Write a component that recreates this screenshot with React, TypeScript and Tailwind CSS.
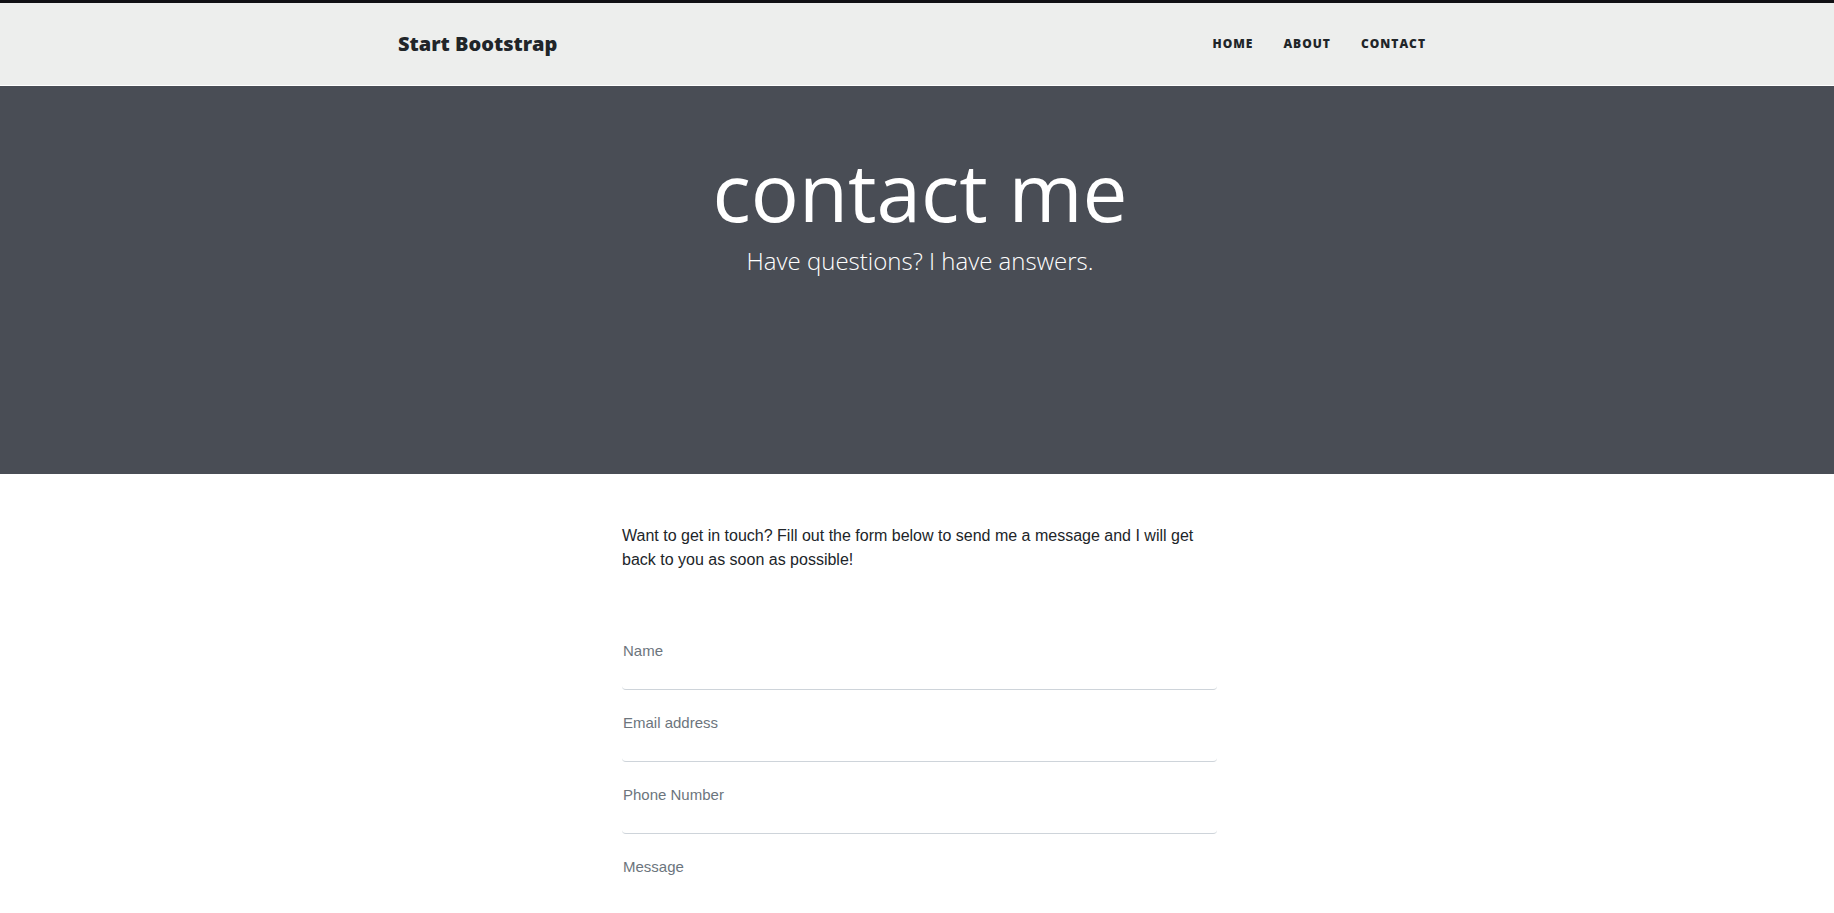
import React from "react";

const fields = ["Name", "Email address", "Phone Number"];

export default function App() {
  return (
    <div className="h-[913px] overflow-hidden bg-white">
      <div className="h-[3px] bg-[#101014]" />
      <nav className="h-[83px] bg-[#edeeed] border-b border-white">
        <div className="flex h-full items-center justify-between pl-[398px] pr-[398px]">
          <a className="text-[20px] font-extrabold text-[#212529] [font-family:'Open_Sans',sans-serif]">
            Start Bootstrap
          </a>
          <ul className="flex items-center gap-[30px] pr-[10px] text-[12px] font-extrabold uppercase tracking-[1px] text-[#212529] [font-family:'Open_Sans',sans-serif]">
            <li>Home</li>
            <li>About</li>
            <li>Contact</li>
          </ul>
        </div>
      </nav>
      <header className="h-[388px] bg-[#494d55] text-white [font-family:'Open_Sans',sans-serif]">
        <div className="flex flex-col items-center pl-[6px] pt-[57px]">
          <h1 className="text-[80px] font-normal leading-[96px]">contact me</h1>
          <span className="mt-[4px] text-[24px] font-light leading-[36px]">
            Have questions? I have answers.
          </span>
        </div>
      </header>
      <main className="mx-auto w-[600px] pl-[5px] pt-[50px] [font-family:'Liberation_Sans',sans-serif]">
        <p className="w-[595px] pr-[12px] text-[16px] leading-[24px] text-[#212529]">
          Want to get in touch? Fill out the form below to send me a message and I will get back to you as soon as possible!
        </p>
        <form className="mt-[46px] flex flex-col">
          {fields.map((f) => (
            <div
              key={f}
              className="h-[72px] rounded-b-[4px] border-b border-[#ced4da] pt-[22px]"
            >
              <label className="block pl-[1px] text-[15px] leading-[22px] text-[#6c757d]">{f}</label>
            </div>
          ))}
          <div className="h-[216px] rounded-b-[4px] border-b border-[#ced4da] pt-[22px]">
            <label className="block pl-[1px] text-[15px] leading-[22px] text-[#6c757d]">Message</label>
          </div>
        </form>
      </main>
    </div>
  );
}
